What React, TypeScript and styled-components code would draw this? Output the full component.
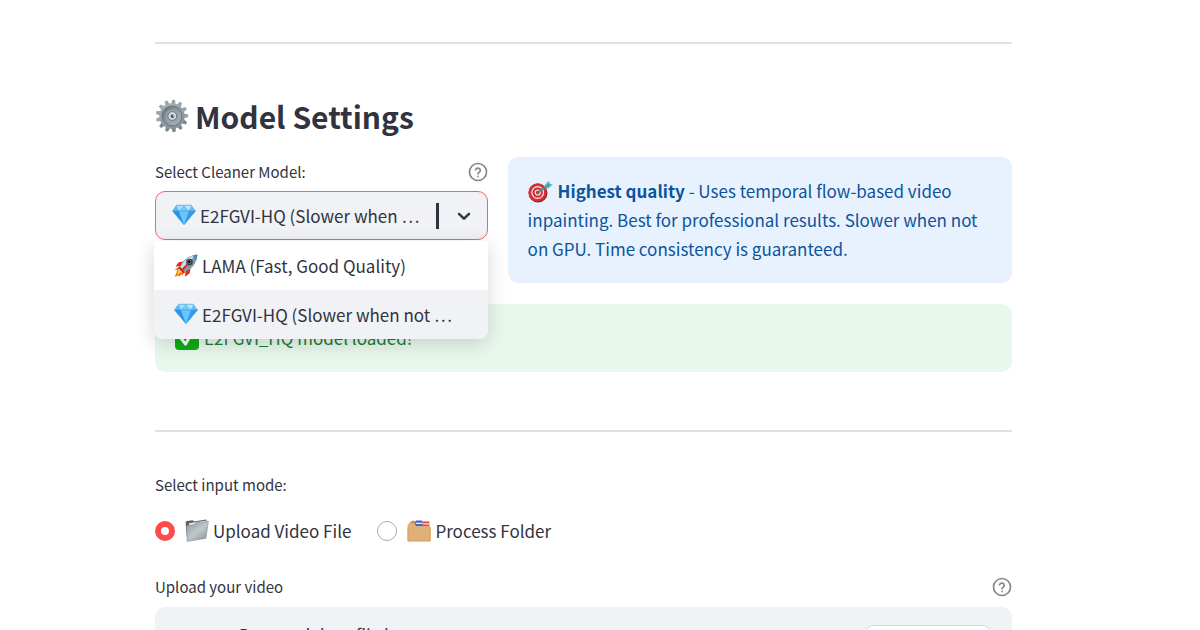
import React, { useState } from "react";
import styled, { createGlobalStyle } from "styled-components";

const ink = "#31333f";

const GlobalStyle = createGlobalStyle`
  *, *::before, *::after { box-sizing: border-box; }
  html { scrollbar-width: none; }
  body {
    margin: 0;
    background: #ffffff;
    color: ${ink};
    font-family: "Source Sans Pro", "Noto Sans CJK KR", "Noto Sans", sans-serif;
    font-size: 17px;
    line-height: 29px;
  }
  svg { flex: none; }
`;

const Page = styled.main`
  display: flex;
  flex-direction: column;
  padding: 42px 188px 60px 155px;
`;

const Divider = styled.hr`
  width: 100%;
  height: 2px;
  margin: 0;
  border: 0;
  background: #e0e1e4;
`;

const Title = styled.h2`
  display: flex;
  align-items: center;
  gap: 6px;
  margin: 48px 0 0;
  padding: 4px 0;
  font-size: 30px;
  font-weight: 700;
  line-height: 40px;
`;

const Columns = styled.div`
  display: grid;
  grid-template-columns: minmax(0, 333fr) minmax(0, 505fr);
  gap: 20px;
  align-items: start;
  margin-top: 17px;
`;

const Field = styled.div`
  position: relative;
`;

const LabelRow = styled.div`
  display: flex;
  align-items: center;
  justify-content: space-between;
  height: 30px;
  font-size: 15px;
  line-height: 24px;
`;

const HelpButton = styled.button`
  display: flex;
  padding: 0;
  border: 0;
  background: none;
  color: #85868d;
`;

const SelectBox = styled.div`
  display: flex;
  align-items: center;
  height: 49px;
  margin-top: 4px;
  padding: 0 14px 0 16px;
  border: 1px solid #f26464;
  border-radius: 10px;
  background: #f0f2f6;
`;

const NativeSelect = styled.select`
  flex: 1;
  min-width: 0;
  margin-left: 4px;
  padding: 0;
  border: 0;
  outline: 0;
  appearance: none;
  background: transparent;
  color: ${ink};
  font: inherit;
  font-feature-settings: "pwid";
  text-overflow: ellipsis;
  white-space: nowrap;
  overflow: hidden;
`;

const Caret = styled.span`
  width: 3px;
  height: 26px;
  margin: 0 16px 0 8px;
  background: ${ink};
`;

const Menu = styled.ul`
  position: absolute;
  z-index: 2;
  top: 100%;
  left: -1px;
  right: 0;
  margin: 1px 0 0;
  padding: 0;
  list-style: none;
  overflow: hidden;
  border-radius: 0 0 9px 9px;
  background: #ffffff;
  box-shadow: 0 5px 20px rgba(0, 0, 0, 0.16);
`;

const MenuItem = styled.li<{ $active?: boolean }>`
  display: flex;
  align-items: center;
  gap: 4px;
  height: 49px;
  padding: 0 30px 0 20px;
  background: ${(p) => (p.$active ? "#f0f2f6" : "#ffffff")};
`;

const Ellipsis = styled.span`
  min-width: 0;
  overflow: hidden;
  font-feature-settings: "pwid";
  text-overflow: ellipsis;
  white-space: nowrap;
`;

const Alert = styled.div<{ $tone: "info" | "success" }>`
  padding: 19px 20px 20px;
  border-radius: 10px;
  background: ${(p) => (p.$tone === "info" ? "#e8f2fe" : "#e9f8ec")};
  color: ${(p) => (p.$tone === "info" ? "#0d539d" : "#1b7d3a")};
  p { margin: 0; }
  svg { margin-right: 5px; vertical-align: -6px; }
`;

const Spaced = styled.div<{ $top: number }>`
  margin-top: ${(p) => p.$top}px;
`;

const RadioGroup = styled.fieldset`
  margin: 38px 0 0;
  padding: 0;
  border: 0;
  legend {
    padding: 0;
    font-size: 15px;
    line-height: 30px;
  }
`;

const RadioRow = styled.div`
  display: flex;
  gap: 26px;
  margin-top: 16px;
`;

const RadioLabel = styled.label`
  display: flex;
  align-items: center;
  svg { margin: 0 4px 0 10px; }
`;

const Radio = styled.input`
  appearance: none;
  width: 20px;
  height: 20px;
  margin: 0;
  border: 1px solid #a9abb0;
  border-radius: 50%;
  background: #ffffff;
  &:checked { border: 6px solid #ff4b4b; }
`;

const Dropzone = styled.div`
  display: flex;
  align-items: flex-start;
  gap: 20px;
  margin-top: 5px;
  padding: 18px 20px;
  border-radius: 10px;
  background: #f0f2f6;
`;

const DropText = styled.div`
  flex: 1;
  line-height: 20px;
  small {
    display: block;
    margin-top: 4px;
    color: #85868d;
    font-size: 15px;
    line-height: 24px;
  }
`;

const BrowseButton = styled.button`
  width: 128px;
  height: 49px;
  border: 1px solid #d6d8dd;
  border-radius: 10px;
  background: #ffffff;
  color: ${ink};
  font: inherit;
`;

const Help = ({ label }: { label: string }) => (
  <HelpButton type="button" aria-label={label}>
    <svg width="20" height="20" viewBox="0 0 20 20" fill="none" stroke="currentColor" strokeWidth="1.7" strokeLinecap="round" strokeLinejoin="round">
      <circle cx="10" cy="10" r="8.5" />
      <path d="M7.6 7.8a2.45 2.45 0 0 1 4.75.7c0 1.6-2.35 2-2.35 3.2" />
      <path d="M10 14.3v.1" />
    </svg>
  </HelpButton>
);

const Gear = () => (
  <svg width="34" height="34" viewBox="0 0 34 34" aria-hidden="true">
    <defs>
      <linearGradient id="gearBody" x1="0" y1="0" x2="0.5" y2="1">
        <stop offset="0" stopColor="#a9b3b9" />
        <stop offset="1" stopColor="#87939a" />
      </linearGradient>
      <linearGradient id="gearDish" x1="0" y1="0" x2="1" y2="1">
        <stop offset="0" stopColor="#667178" />
        <stop offset="1" stopColor="#b6c0c5" />
      </linearGradient>
    </defs>
    {Array.from({ length: 13 }, (_, i) => (
      <path key={i} d="M14.6 6 15.6.8h2.8L19.4 6z" fill={i > 3 && i < 9 ? "#7c888f" : "#9aa5ab"} transform={`rotate(${(i * 360) / 13 + 6} 17 17)`} />
    ))}
    <circle cx="17" cy="17" r="12.7" fill="url(#gearBody)" />
    <circle cx="17" cy="17" r="9.9" fill="url(#gearDish)" stroke="#68747b" strokeWidth="1" />
    <circle cx="17.4" cy="17.4" r="7" fill="#98a4aa" />
    <circle cx="17.3" cy="17" r="4.4" fill="#d3dade" stroke="#5f6a72" strokeWidth="0.9" />
    <circle cx="17.6" cy="17.1" r="1.9" fill="#3e4850" />
    <path d="M17.5 15.7q2.4.5 1.4 2.6" fill="none" stroke="#f4f7f8" strokeWidth="0.9" />
  </svg>
);

const Gem = () => (
  <svg width="24" height="24" viewBox="0 0 24 24" aria-hidden="true">
    <path d="M4.3 1.2h15.2L23.7 7 12 21 .4 7z" fill="#4fb2f5" />
    <path d="M4.3 1.2 7 7H.4z" fill="#5ab9f4" />
    <path d="M4.3 1.2H12L7 7z" fill="#a9e0ff" />
    <path d="M12 1.2 17 7H7z" fill="#72c9fb" />
    <path d="M12 1.2h7.5L17 7z" fill="#bce9ff" />
    <path d="M19.5 1.2 23.7 7H17z" fill="#6dbdf0" />
    <path d="M.4 7H7l5 14z" fill="#2d91e5" />
    <path d="M7 7h10l-5 14z" fill="#6ac5fb" />
    <path d="M17 7h6.7L12 21z" fill="#369ae9" />
    <path d="M4.3 1.2h15.2M.4 7h23.3" stroke="#398fc9" strokeWidth="0.5" />
  </svg>
);

const Rocket = () => (
  <svg width="24" height="24" viewBox="0 0 24 24" aria-hidden="true">
    <path d="M6 12 .7 15.7l2.5.3-.8 3-1.8 3.8 4-1.2 1 .7 2-2.1 1.2 1.2 1.8-6.3z" fill="#ff6a17" />
    <path d="m6.3 14.3-3.5 2.2 1.7.3-2 4.1 4.2-2.4.2 1.1L9 16z" fill="#ffd62e" />
    <path d="M9.4 7.6 4.7 8.2 1.6 12.5l6.1-.5zM16.6 14.4l-1 4.8-4.5 3.5.4-6.6z" fill="#dc2824" />
    <path d="M5.9 13.2C8.2 7.2 13 2 23.4.6 22.8 9.8 17.3 15.7 10.8 18z" fill="#8295a3" />
    <path d="M6.5 12.7C9 7 14 2.6 21.4 1.2L8.8 15.4z" fill="#d3dce2" />
    <path d="m5.4 12.8 5.6 5.5-1.2 1.3-5.6-5.5z" fill="#b42225" />
    <path d="M18.4 1.8c1.4-.6 3-1 5-1.2-.2 2-.5 3.8-1.1 5.3z" fill="#3b8dc9" />
    <circle cx="15.4" cy="8" r="3.3" fill="#343c47" />
    <circle cx="15.1" cy="7.8" r="1.8" fill="#10131a" stroke="#9aa6ae" strokeWidth="0.5" />
    <path d="m8.9 15.1 4-4.2" stroke="#c92a27" strokeWidth="1.8" strokeLinecap="round" />
  </svg>
);

const Dart = () => (
  <svg width="25" height="24" viewBox="0 0 25 24" aria-hidden="true">
    <circle cx="10" cy="13" r="9.5" fill="#9d2228" />
    <circle cx="9.5" cy="12.3" r="9" fill="#d72f35" />
    <circle cx="9.7" cy="12.5" r="6.4" fill="#f5e9e9" />
    <circle cx="9.7" cy="12.5" r="5.2" fill="#d52d34" />
    <circle cx="9.8" cy="12.5" r="3.1" fill="#f5e9e9" />
    <circle cx="9.8" cy="12.5" r="1.9" fill="#d52d34" />
    <path d="m10 12.4 9.4-7.6" stroke="#3e8a93" strokeWidth="1.6" />
    <path d="m16.8 5.1 4.3-4.3.5 3 3.2.8-4.7 4-3.5-.4z" fill="#55b9b4" />
    <path d="m17.3 7.7 4.1-3.7" stroke="#267c83" strokeWidth="0.9" />
  </svg>
);

const Check = () => (
  <svg width="24" height="24" viewBox="0 0 24 24" aria-hidden="true">
    <rect width="24" height="23" rx="4" fill="#10ac14" />
    <path d="m6.5 11.8 4 5.3 7.2-12" fill="none" stroke="#ffffff" strokeWidth="3" strokeLinecap="round" strokeLinejoin="round" />
  </svg>
);

const GreyFolder = () => (
  <svg width="24" height="24" viewBox="0 0 24 24" aria-hidden="true">
    <defs>
      <linearGradient id="folderFront" x1="0" y1="0" x2="0.8" y2="1">
        <stop offset="0" stopColor="#8e989d" />
        <stop offset="0.55" stopColor="#c0c7ca" />
        <stop offset="1" stopColor="#8f999e" />
      </linearGradient>
    </defs>
    <path d="M.6 3.3 1.6 2l6.2-.8 1.3 1.2L21 .5l1.2 1.3L20 19 2.2 21z" fill="#59646a" />
    <path d="m4 4.2 18-2.6v3L4 7z" fill="#e9edef" />
    <path d="M1.6 6.5 9 5.7l1.7-1.8 12.7-1.5-2.5 16.8L2.2 22.5z" fill="url(#folderFront)" stroke="#737e84" strokeWidth="0.5" />
  </svg>
);

const Dividers = () => (
  <svg width="24" height="24" viewBox="0 0 24 24" aria-hidden="true">
    <path d="M1 7 3 3.2l3-1.7 3.2 1L10 7z" fill="#c48f50" />
    <path d="M8.8 1.5H15l.7 2.6v3.4H8z" fill="#4563c8" />
    <path d="M15.5 2.5h6.8v5h-7z" fill="#d8473e" />
    <path d="M9 4.3h6M15.7 4.8H22" stroke="#edf0f5" strokeWidth="1.3" />
    <path d="M.5 6 2.3 4l4.5.3 2.5 3H23a.7.7 0 0 1 .7.7v14.3H.5z" fill="#dfb077" />
    <path d="M1 8.8V22h22V8.5" fill="none" stroke="#d09b5d" strokeWidth="0.8" />
  </svg>
);

const Chevron = () => (
  <svg width="18" height="18" viewBox="0 0 18 18" fill="none" stroke={ink} strokeWidth="2.4" strokeLinecap="round" strokeLinejoin="round" aria-hidden="true">
    <path d="m4 6.8 5 4.9 5-4.9" />
  </svg>
);

const Cloud = () => (
  <svg width="44" height="44" viewBox="0 0 24 24" fill="none" stroke="#a3a8b4" strokeWidth="2" aria-hidden="true">
    <path d="M7 19a5 5 0 0 1-.5-10A6 6 0 0 1 18 10a4.5 4.5 0 0 1 .5 9zM12 16v-6m-3 3 3-3 3 3" />
  </svg>
);

export default function App() {
  const [model, setModel] = useState("e2fgvi");
  const [mode, setMode] = useState("file");

  return (
    <>
      <GlobalStyle />
      <Page>
        <Divider />
        <Title><Gear />Model Settings</Title>

        <Columns>
          <Field>
            <LabelRow>
              <label htmlFor="model">Select Cleaner Model:</label>
              <Help label="Help for Select Cleaner Model" />
            </LabelRow>
            <SelectBox>
              <Gem />
              <NativeSelect id="model" value={model} onChange={(e) => setModel(e.target.value)}>
                <option value="lama">LAMA (Fast, Good Quality)</option>
                <option value="e2fgvi">E2FGVI-HQ (Slower when not on GPU)</option>
              </NativeSelect>
              <Caret />
              <Chevron />
            </SelectBox>
            <Menu role="listbox" aria-label="Cleaner models">
              <MenuItem role="option" aria-selected={model === "lama"} onClick={() => setModel("lama")}>
                <Rocket /><Ellipsis>LAMA (Fast, Good Quality)</Ellipsis>
              </MenuItem>
              <MenuItem role="option" $active aria-selected={model === "e2fgvi"} onClick={() => setModel("e2fgvi")}>
                <Gem /><Ellipsis>E2FGVI-HQ (Slower when not on GPU)</Ellipsis>
              </MenuItem>
            </Menu>
          </Field>
          <Alert $tone="info">
            <p><Dart /><strong>Highest quality</strong> - Uses temporal flow-based video inpainting. Best for professional results. Slower when not on GPU. Time consistency is guaranteed.</p>
          </Alert>
        </Columns>

        <Spaced $top={21}>
          <Alert $tone="success"><p><Check />E2FGVI_HQ model loaded!</p></Alert>
        </Spaced>
        <Spaced $top={58}><Divider /></Spaced>

        <RadioGroup>
          <legend>Select input mode:</legend>
          <RadioRow>
            <RadioLabel>
              <Radio type="radio" name="mode" checked={mode === "file"} onChange={() => setMode("file")} />
              <GreyFolder />Upload Video File
            </RadioLabel>
            <RadioLabel>
              <Radio type="radio" name="mode" checked={mode === "folder"} onChange={() => setMode("folder")} />
              <Dividers />Process Folder
            </RadioLabel>
          </RadioRow>
        </RadioGroup>

        <Spaced $top={27}>
          <LabelRow>
            <span>Upload your video</span>
            <Help label="Help for Upload your video" />
          </LabelRow>
          <Dropzone>
            <Cloud />
            <DropText>Drag and drop file here<small>Limit 200MB per file</small></DropText>
            <BrowseButton type="button">Browse files</BrowseButton>
          </Dropzone>
        </Spaced>
      </Page>
    </>
  );
}
